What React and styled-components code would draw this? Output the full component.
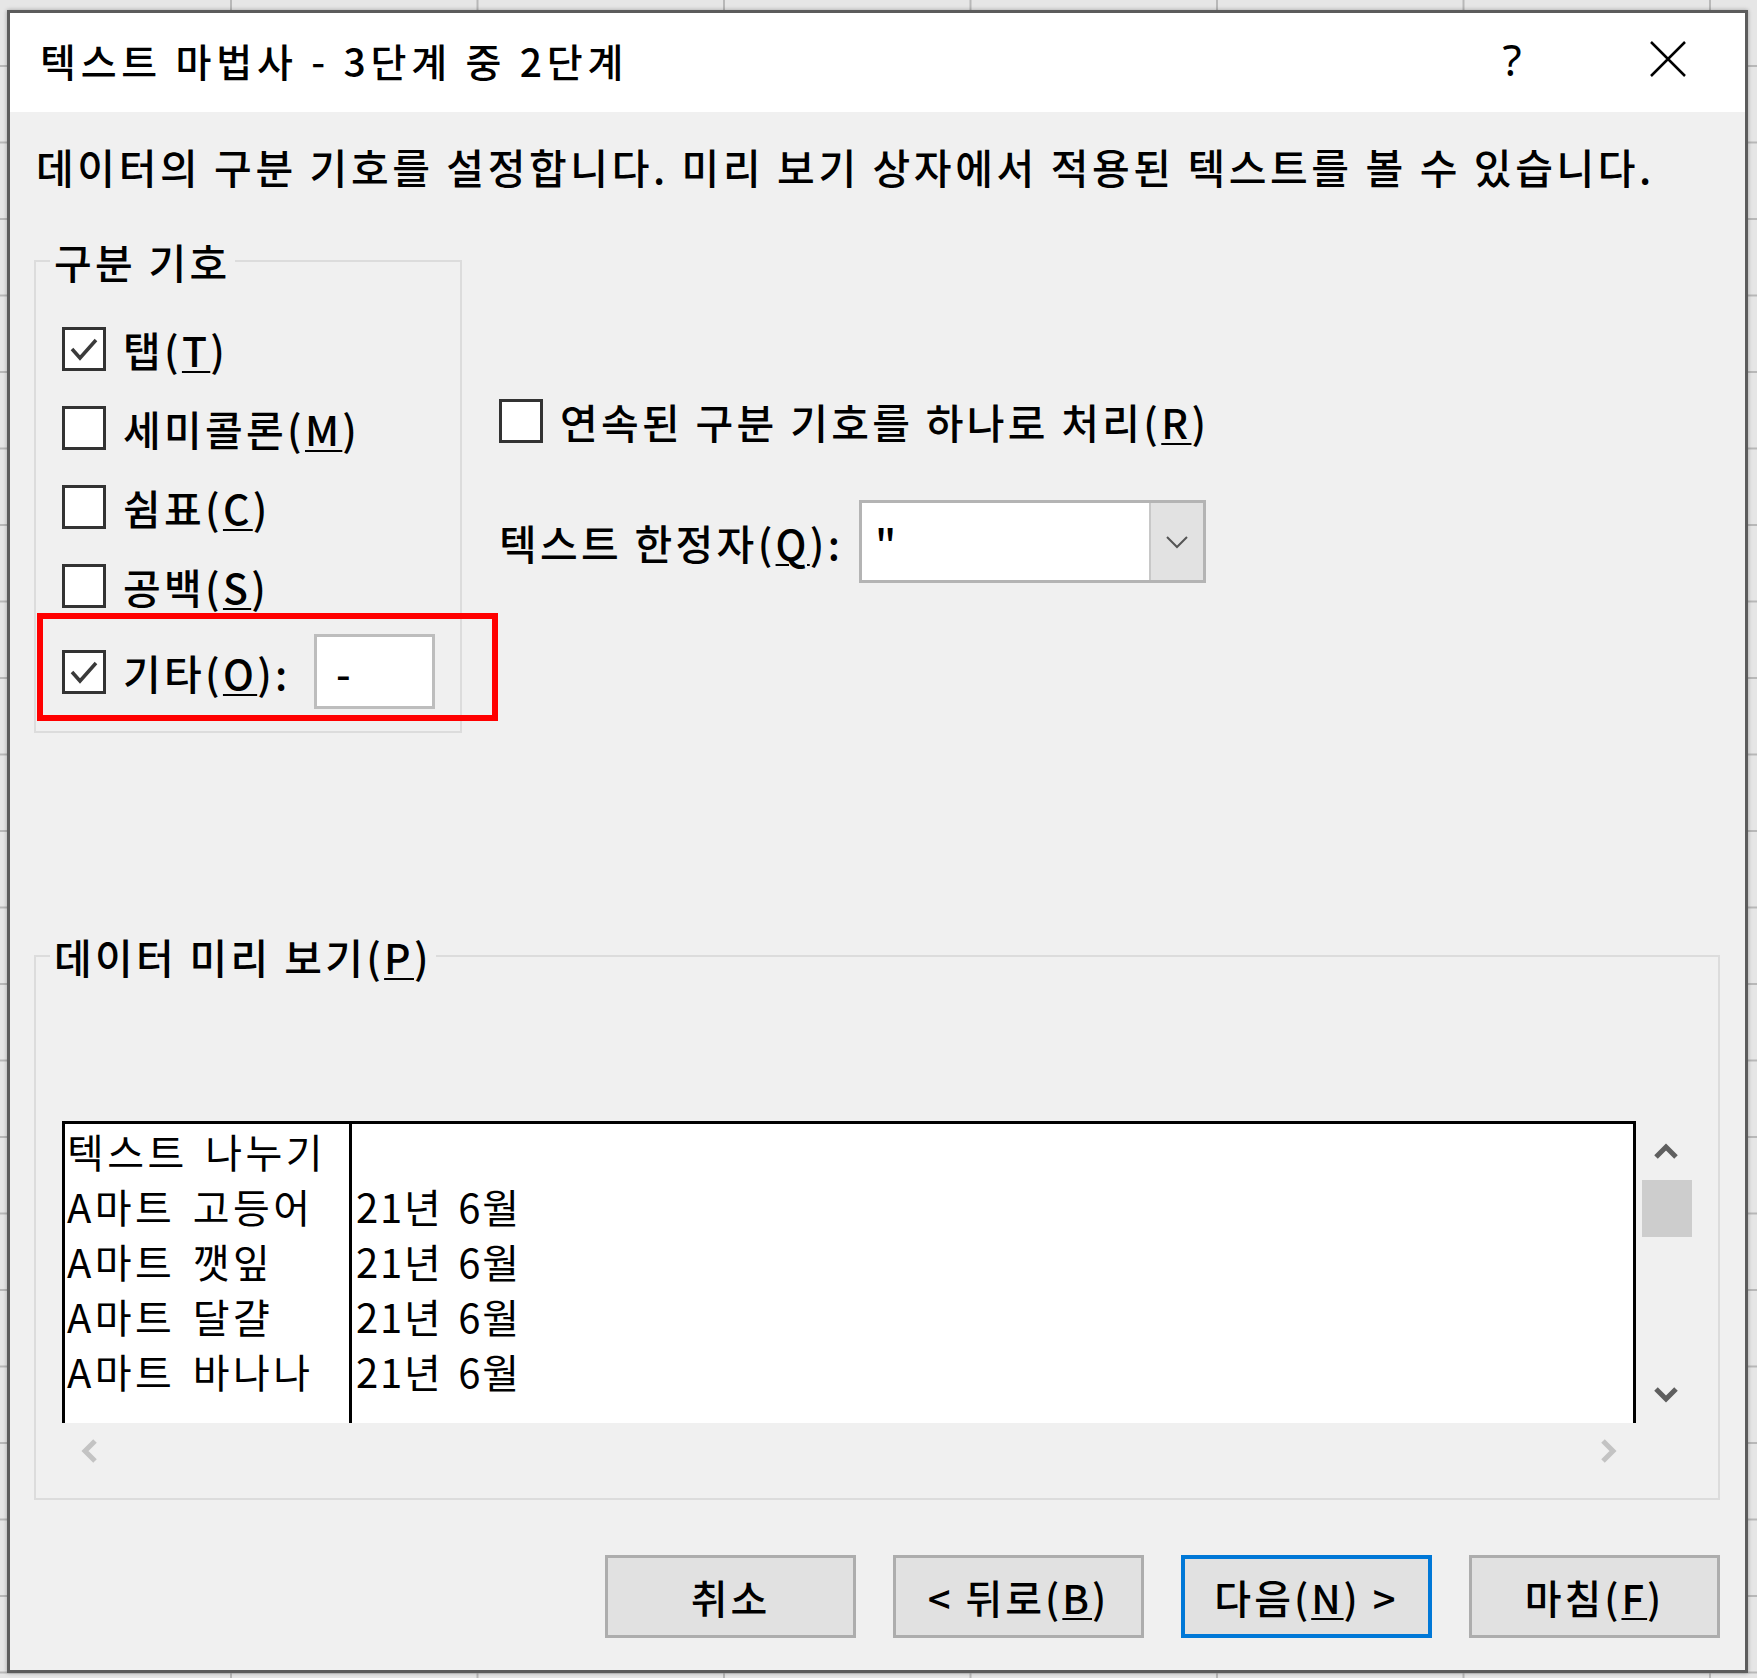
import React from "react";
import styled, { createGlobalStyle } from "styled-components";

const FONT = `"Noto Sans CJK KR", "Noto Sans", sans-serif`;

const GlobalStyle = createGlobalStyle`
  html, body { margin: 0; }
  body {
    box-sizing: border-box;
    height: 1678px;
    padding: 10px 0 0 7px;
    overflow: hidden;
    font-family: ${FONT};
    font-weight: 500;
    color: #000;
    background-color: #e6e6e6;
    background-image:
      linear-gradient(90deg, #b8b8b8 2px, transparent 2px),
      linear-gradient(180deg, #b8b8b8 2px, transparent 2px);
    background-size: 246.5px 76.5px;
    background-position: 230px 65px;
  }
`;

const Dialog = styled.div`
  box-sizing: border-box;
  width: 1741px;
  height: 1663px;
  display: flex;
  flex-direction: column;
  border: 3px solid #5c5c5c;
  background: #f0f0f0;
  box-shadow: 0 0 4px rgba(0, 0, 0, 0.3);
`;

const TitleBar = styled.div`
  flex: none;
  height: 99px;
  display: flex;
  align-items: center;
  padding: 0 27px 0 30px;
  background: #fff;
`;

const Title = styled.div`
  flex: 1;
  padding-bottom: 5px;
  font-size: 39px;
  letter-spacing: 4.8px;
`;

const TitleButton = styled.div`
  width: 100px;
  height: 60px;
  display: flex;
  align-items: center;
  justify-content: center;
  margin-left: ${({ $gap = 0 }) => $gap}px;
  padding-bottom: 8px;
  font-family: "Noto Sans", sans-serif;
  font-size: 44px;
  font-weight: 400;
`;

const Description = styled.p`
  margin: 31px 0 0 26px;
  font-size: 41px;
  line-height: 46px;
  letter-spacing: 3.6px;
  white-space: nowrap;
`;

const TopSection = styled.div`
  display: flex;
  align-items: flex-start;
  margin: 49px 0 0 24px;
`;

const GroupBox = styled.fieldset`
  box-sizing: border-box;
  width: ${({ $width }) => $width}px;
  min-width: 0;
  margin: ${({ $margin = "0" }) => $margin};
  padding: ${({ $padding }) => $padding};
  border: 2px solid #dcdcdc;
`;

const Legend = styled.legend`
  margin-left: -12px;
  padding: 0 4px;
  font-size: 41px;
  line-height: 46px;
  letter-spacing: 3.3px;
`;

const OptionRow = styled.div`
  position: relative;
  display: flex;
  align-items: center;
  gap: 17px;
  height: 79px;
  margin-top: ${({ $offset = 0 }) => $offset}px;
  font-size: 41px;
  letter-spacing: 3.3px;
  white-space: nowrap;
`;

const OptionText = styled.span`
  width: ${({ $width }) => ($width ? `${$width}px` : "auto")};
`;

const Box = styled.span`
  box-sizing: border-box;
  flex: none;
  width: 44px;
  height: 44px;
  display: flex;
  align-items: center;
  justify-content: center;
  border: 3px solid #333;
  background: #fff;
`;

const Key = styled.span`
  text-decoration: underline;
  text-decoration-thickness: 2px;
  text-underline-offset: 4px;
`;

const SmallField = styled.div`
  box-sizing: border-box;
  width: 121px;
  height: 75px;
  padding-left: 19px;
  display: flex;
  align-items: center;
  border: 3px solid #bdbdbd;
  background: #fff;
  font-size: 41px;
`;

const Highlight = styled.div`
  position: absolute;
  left: -25px;
  top: -19px;
  box-sizing: border-box;
  width: 461px;
  height: 108px;
  border: 6px solid #f00;
  pointer-events: none;
`;

const SideOptions = styled.div`
  display: flex;
  flex-direction: column;
  gap: 40px;
  margin-left: 37px;
  padding-top: 143px;
`;

const QualifierRow = styled.div`
  display: flex;
  align-items: center;
  height: 83px;
`;

const FieldLabel = styled.span`
  width: 360px;
  font-size: 41px;
  letter-spacing: 3.3px;
  white-space: nowrap;
`;

const Combo = styled.div`
  box-sizing: border-box;
  width: 347px;
  height: 83px;
  display: flex;
  border: 3px solid #b4b4b4;
  background: #fff;
`;

const ComboValue = styled.div`
  flex: 1;
  padding-left: 13px;
  display: flex;
  align-items: center;
  font-size: 41px;
`;

const DropButton = styled.div`
  width: 52px;
  display: flex;
  align-items: center;
  justify-content: center;
  border-left: 2px solid #c8c8c8;
  background: #e2e2e2;
`;

const PreviewArea = styled.div`
  display: flex;
`;

const DataPane = styled.div`
  width: 1574px;
  display: flex;
  flex-direction: column;
`;

const DataGrid = styled.div`
  box-sizing: border-box;
  height: 302px;
  display: flex;
  border: 3px solid #000;
  border-bottom: none;
  background: #fff;
`;

const DataColumn = styled.div`
  box-sizing: border-box;
  flex: ${({ $grow }) => ($grow ? 1 : "none")};
  width: ${({ $width }) => ($width ? `${$width}px` : "auto")};
  padding-left: ${({ $inset }) => $inset}px;
  border-right: ${({ $divider }) => ($divider ? "3px solid #000" : "none")};
  letter-spacing: ${({ $tracking }) => $tracking}px;
`;

const Cell = styled.div`
  height: 55px;
  line-height: 55px;
  font-size: 40px;
  font-weight: 400;
  word-spacing: 0.12em;
  white-space: pre;
`;

const HScroll = styled.div`
  height: 56px;
  display: flex;
  align-items: center;
  justify-content: space-between;
  padding: 0 16px;
`;

const VScroll = styled.div`
  width: 59px;
  height: 302px;
  display: flex;
  flex-direction: column;
`;

const ScrollArrow = styled.div`
  height: ${({ $h }) => $h}px;
  display: flex;
  align-items: center;
  justify-content: center;
  margin-top: ${({ $end }) => ($end ? "auto" : "0")};
`;

const Thumb = styled.div`
  height: 57px;
  margin: 0 3px 0 6px;
  background: #cdcdcd;
`;

const Footer = styled.div`
  display: flex;
  justify-content: flex-end;
  gap: 37px;
  margin-top: 55px;
  padding-right: 25px;
`;

const Button = styled.button`
  box-sizing: border-box;
  width: 251px;
  height: 83px;
  padding: 0;
  border: ${({ $primary }) =>
    $primary ? "4px solid #0078d7" : "3px solid #adadad"};
  background: #e1e1e1;
  color: #000;
  font-family: ${FONT};
  font-size: 40px;
  font-weight: 500;
  letter-spacing: 3px;
`;

const Check = () => (
  <svg width="34" height="34" viewBox="0 0 34 34">
    <polyline
      points="5,17 13,26 29,8"
      fill="none"
      stroke="#3a3a3a"
      strokeWidth="3.5"
    />
  </svg>
);

const Checkbox = ({ checked }) => <Box>{checked ? <Check /> : null}</Box>;

const Chevron = ({ points, color, width = 5, w = 26, h = 16 }) => (
  <svg width={w} height={h} viewBox={`0 0 ${w} ${h}`}>
    <polyline points={points} fill="none" stroke={color} strokeWidth={width} />
  </svg>
);

const rows = [
  ["텍스트 나누기", ""],
  ["A마트 고등어", "21년 6월"],
  ["A마트 깻잎", "21년 6월"],
  ["A마트 달걀", "21년 6월"],
  ["A마트 바나나", "21년 6월"],
];

const App = () => (
  <>
    <GlobalStyle />
    <Dialog>
      <TitleBar>
        <Title>텍스트 마법사 - 3단계 중 2단계</Title>
        <TitleButton>?</TitleButton>
        <TitleButton $gap={56}>
          <svg width="38" height="38" viewBox="0 0 38 38">
            <path d="M2 2 L36 36 M36 2 L2 36" stroke="#000" strokeWidth="2.5" />
          </svg>
        </TitleButton>
      </TitleBar>

      <Description>
        데이터의 구분 기호를 설정합니다. 미리 보기 상자에서 적용된 텍스트를 볼
        수 있습니다.
      </Description>

      <TopSection>
        <GroupBox $width={428} $padding="25px 0 20px 26px">
          <Legend>구분 기호</Legend>
          <OptionRow>
            <Checkbox checked />
            <OptionText>
              탭(<Key>T</Key>)
            </OptionText>
          </OptionRow>
          <OptionRow>
            <Checkbox />
            <OptionText>
              세미콜론(<Key>M</Key>)
            </OptionText>
          </OptionRow>
          <OptionRow>
            <Checkbox />
            <OptionText>
              쉼표(<Key>C</Key>)
            </OptionText>
          </OptionRow>
          <OptionRow>
            <Checkbox />
            <OptionText>
              공백(<Key>S</Key>)
            </OptionText>
          </OptionRow>
          <OptionRow $offset={7}>
            <Checkbox checked />
            <OptionText $width={174}>
              기타(<Key>O</Key>):
            </OptionText>
            <SmallField>-</SmallField>
            <Highlight />
          </OptionRow>
        </GroupBox>

        <SideOptions>
          <OptionRow>
            <Checkbox />
            <OptionText>
              연속된 구분 기호를 하나로 처리(<Key>R</Key>)
            </OptionText>
          </OptionRow>
          <QualifierRow>
            <FieldLabel>
              텍스트 한정자(<Key>Q</Key>):
            </FieldLabel>
            <Combo>
              <ComboValue>"</ComboValue>
              <DropButton>
                <Chevron points="2,2 12,12 22,2" color="#555" width={2} w={24} h={14} />
              </DropButton>
            </Combo>
          </QualifierRow>
        </SideOptions>
      </TopSection>

      <GroupBox $width={1686} $margin="200px 0 0 24px" $padding="142px 0 19px 26px">
        <Legend>
          데이터 미리 보기(<Key>P</Key>)
        </Legend>
        <PreviewArea>
          <DataPane>
            <DataGrid>
              <DataColumn $width={287} $inset={2} $tracking={3.5} $divider>
                {rows.map(([name], i) => (
                  <Cell key={i}>{name}</Cell>
                ))}
              </DataColumn>
              <DataColumn $grow $inset={4} $tracking={1.8}>
                {rows.map(([, date], i) => (
                  <Cell key={i}>{date}</Cell>
                ))}
              </DataColumn>
            </DataGrid>
            <HScroll>
              <Chevron points="17,3 7,13 17,23" color="#c3c3c3" w={24} h={26} />
              <Chevron points="7,3 17,13 7,23" color="#c3c3c3" w={24} h={26} />
            </HScroll>
          </DataPane>
          <VScroll>
            <ScrollArrow $h={59}>
              <Chevron points="3,14 13,4 23,14" color="#5f5f5f" />
            </ScrollArrow>
            <Thumb />
            <ScrollArrow $h={57} $end>
              <Chevron points="3,2 13,12 23,2" color="#5f5f5f" />
            </ScrollArrow>
          </VScroll>
        </PreviewArea>
      </GroupBox>

      <Footer>
        <Button>취소</Button>
        <Button>
          &lt; 뒤로(<Key>B</Key>)
        </Button>
        <Button $primary>
          다음(<Key>N</Key>) &gt;
        </Button>
        <Button>
          마침(<Key>F</Key>)
        </Button>
      </Footer>
    </Dialog>
  </>
);

export default App;
